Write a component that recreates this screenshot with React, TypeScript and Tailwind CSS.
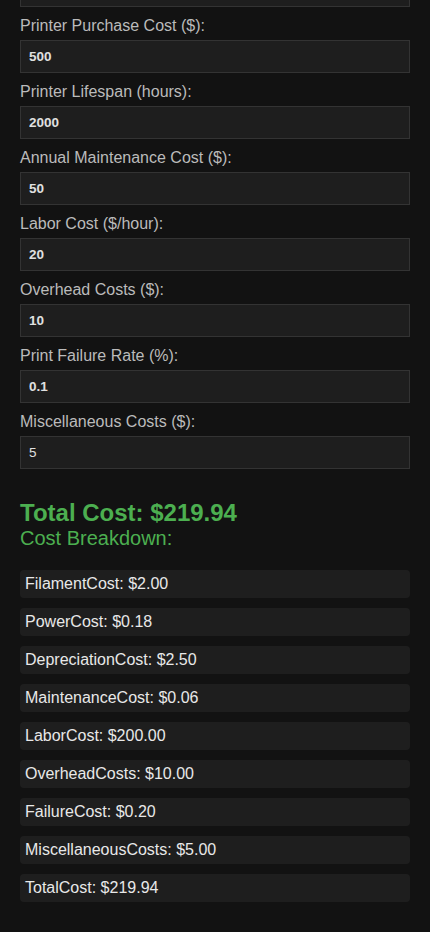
const FIELDS: { label: string; value: string; bold?: boolean }[] = [
  { label: "Printer Purchase Cost ($):", value: "500", bold: true },
  { label: "Printer Lifespan (hours):", value: "2000", bold: true },
  { label: "Annual Maintenance Cost ($):", value: "50", bold: true },
  { label: "Labor Cost ($/hour):", value: "20", bold: true },
  { label: "Overhead Costs ($):", value: "10", bold: true },
  { label: "Print Failure Rate (%):", value: "0.1", bold: true },
  { label: "Miscellaneous Costs ($):", value: "5" },
];

const BREAKDOWN: [string, string][] = [
  ["FilamentCost", "$2.00"],
  ["PowerCost", "$0.18"],
  ["DepreciationCost", "$2.50"],
  ["MaintenanceCost", "$0.06"],
  ["LaborCost", "$200.00"],
  ["OverheadCosts", "$10.00"],
  ["FailureCost", "$0.20"],
  ["MiscellaneousCosts", "$5.00"],
  ["TotalCost", "$219.94"],
];

export default function App() {
  return (
    <div
      className="min-h-[932px] bg-[#121212] px-[20px]"
      style={{ fontFamily: '"Liberation Sans", Arial, sans-serif' }}
    >
      {/* tail of the field scrolled off the top */}
      <div className="h-[7px] border-x border-b border-[#333] bg-[#1e1e1e]" />

      {FIELDS.map((f) => (
        <div key={f.label}>
          <label className="mt-[10px] mb-[5px] block text-[16px] leading-[18px] text-[#bbbbbb]">
            {f.label}
          </label>
          <input
            readOnly
            value={f.value}
            className={`block h-[33px] w-full border border-[#333] bg-[#1e1e1e] px-[8px] text-[13.5px] text-[#e0e0e0] outline-none ${
              f.bold ? "font-bold" : "font-normal"
            }`}
            style={{ fontFamily: '"Liberation Sans", Arial, sans-serif' }}
          />
        </div>
      ))}

      <h2 className="mt-[30px] text-[24px] font-bold leading-[28px] text-[#4caf50]">
        Total Cost: $219.94
      </h2>
      <h3 className="text-[20px] leading-[23px] text-[#4caf50]">Cost Breakdown:</h3>

      <ul className="mt-[20px] flex flex-col gap-[10px]">
        {BREAKDOWN.map(([k, v]) => (
          <li
            key={k}
            className="h-[28px] rounded-[4px] bg-[#1e1e1e] px-[5px] text-[16px] leading-[28px] text-[#e8e8e8]"
          >
            {k}: {v}
          </li>
        ))}
      </ul>
    </div>
  );
}
